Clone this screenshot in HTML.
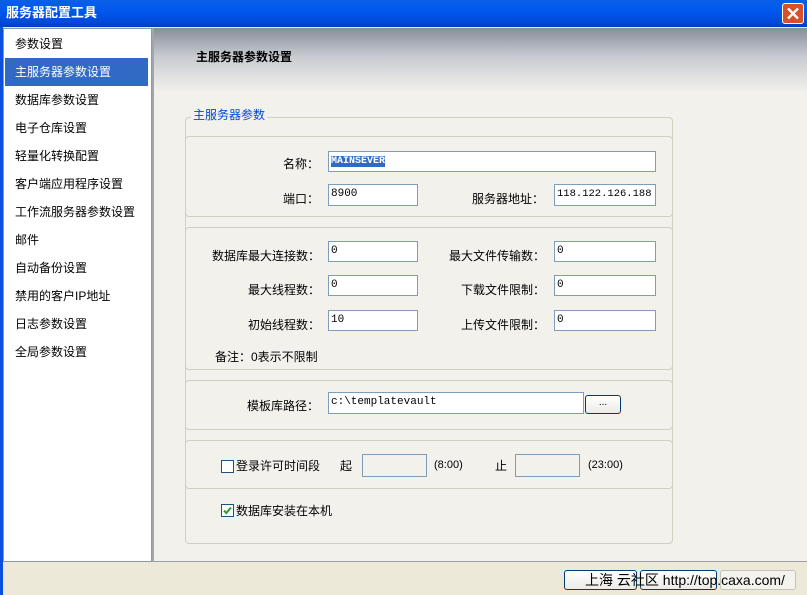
<!DOCTYPE html>
<html><head><meta charset="utf-8"><style>
*{margin:0;padding:0;box-sizing:border-box}
body{width:807px;height:595px;overflow:hidden;position:relative;background:#ECE9D8;font-family:"Liberation Sans","Noto Sans CJK SC",sans-serif;font-size:12px;color:#000}
.a{position:absolute}
.t{position:absolute;white-space:nowrap;line-height:14px}
.inp{position:absolute;background:#fff;border:1px solid #7F9DB9;font-family:"Liberation Mono",monospace;font-size:11px;padding:2px 2px;line-height:14px}
.gb{position:absolute;border:1px solid #D0D0BF;border-radius:4px}
.li{position:absolute;left:5px;width:143px;height:28px;line-height:28px;padding-left:10px;font-size:12px}
.r{text-align:right}
</style></head><body>
<div class="a" style="left:0;top:0;width:807px;height:27px;background:linear-gradient(#0A5FE6,#0058EE 40%,#0049D8 85%,#003BC2)"></div>
<div class="t" style="left:6px;top:6px;color:#fff;font-weight:bold;font-size:13px">服务器配置工具</div>
<div class="a" style="left:782px;top:3px;width:22px;height:21px;background:#D8502A;border:1px solid #fff;border-radius:3px"><svg width="20" height="19" viewBox="0 0 20 19"><path d="M5 4.5L15 14.5M15 4.5L5 14.5" stroke="#fff" stroke-width="2.4"/></svg></div>
<div class="a" style="left:0;top:27px;width:3px;height:568px;background:#0A4FE0"></div>
<div class="a" style="left:3px;top:28px;width:149px;height:534px;background:#fff;border:1px solid #8A9AA6"></div>
<div class="a" style="left:152px;top:28px;width:655px;height:534px;background:#F2F1EC;border-left:2px solid #A0A6AA;border-bottom:1px solid #9AA0A6"></div>
<div class="a" style="left:154px;top:28px;width:653px;height:64px;background:linear-gradient(#878E9A,#C8CBD1 45%,#F2F1EC)"></div>
<div class="t" style="left:196px;top:50px;font-weight:bold">主服务器参数设置</div>
<div class="li" style="top:30px">参数设置</div>
<div class="li" style="top:58px;background:#316AC5;color:#fff">主服务器参数设置</div>
<div class="li" style="top:86px">数据库参数设置</div>
<div class="li" style="top:114px">电子仓库设置</div>
<div class="li" style="top:142px">轻量化转换配置</div>
<div class="li" style="top:170px">客户端应用程序设置</div>
<div class="li" style="top:198px">工作流服务器参数设置</div>
<div class="li" style="top:226px">邮件</div>
<div class="li" style="top:254px">自动备份设置</div>
<div class="li" style="top:282px">禁用的客户IP地址</div>
<div class="li" style="top:310px">日志参数设置</div>
<div class="li" style="top:338px">全局参数设置</div>

<div class="gb" style="left:185px;top:117px;width:488px;height:427px"></div>
<div class="t" style="left:191px;top:108px;background:#F2F1EC;color:#0046D5;padding:0 2px">主服务器参数</div>
<div class="gb" style="left:185px;top:136px;width:488px;height:81px"></div>
<div class="gb" style="left:185px;top:227px;width:488px;height:143px"></div>
<div class="gb" style="left:185px;top:380px;width:488px;height:50px"></div>
<div class="gb" style="left:185px;top:440px;width:488px;height:49px"></div>

<div class="t" style="left:283px;top:157px">名称：</div>
<div class="inp" style="left:328px;top:151px;width:328px;height:21px"><span style="background:#316AC5;color:#fff;font-weight:bold;font-size:10px">MAINSEVER</span></div>
<div class="t" style="left:283px;top:192px">端口：</div>
<div class="inp" style="left:328px;top:184px;width:90px;height:22px">8900</div>
<div class="t" style="left:472px;top:192px">服务器地址：</div>
<div class="inp" style="left:554px;top:184px;width:102px;height:22px;font-size:10.5px">118.122.126.188</div>

<div class="t r" style="left:200px;width:120px;top:249px">数据库最大连接数：</div>
<div class="inp" style="left:328px;top:241px;width:90px;height:21px">0</div>
<div class="t r" style="left:420px;width:125px;top:249px">最大文件传输数：</div>
<div class="inp" style="left:554px;top:241px;width:102px;height:21px">0</div>
<div class="t r" style="left:200px;width:120px;top:283px">最大线程数：</div>
<div class="inp" style="left:328px;top:275px;width:90px;height:21px">0</div>
<div class="t r" style="left:420px;width:125px;top:283px">下载文件限制：</div>
<div class="inp" style="left:554px;top:275px;width:102px;height:21px">0</div>
<div class="t r" style="left:200px;width:120px;top:318px">初始线程数：</div>
<div class="inp" style="left:328px;top:310px;width:90px;height:21px">10</div>
<div class="t r" style="left:420px;width:125px;top:318px">上传文件限制：</div>
<div class="inp" style="left:554px;top:310px;width:102px;height:21px">0</div>
<div class="t" style="left:215px;top:350px">备注：0表示不限制</div>

<div class="t" style="left:247px;top:399px">模板库路径：</div>
<div class="inp" style="left:328px;top:392px;width:256px;height:22px">c:\templatevault</div>
<div class="a" style="left:585px;top:395px;width:36px;height:19px;border:1px solid #003C74;border-radius:3px;background:linear-gradient(#fff,#ECEBE6);font-size:10px;text-align:center;line-height:14px">...</div>

<div class="a" style="left:221px;top:460px;width:13px;height:13px;border:1px solid #1C5180;background:#fff"></div>
<div class="t" style="left:236px;top:459px">登录许可时间段</div>
<div class="t" style="left:340px;top:459px">起</div>
<div class="a" style="left:362px;top:454px;width:65px;height:23px;border:1px solid #7F9DB9;background:#F2F1EC"></div>
<div class="t" style="left:434px;top:458px;font-size:11px">(8:00)</div>
<div class="t" style="left:495px;top:459px">止</div>
<div class="a" style="left:515px;top:454px;width:65px;height:23px;border:1px solid #7F9DB9;background:#F2F1EC"></div>
<div class="t" style="left:588px;top:458px;font-size:11px">(23:00)</div>

<div class="a" style="left:221px;top:504px;width:13px;height:13px;border:1px solid #1C5180;background:#fff"><svg width="11" height="11" viewBox="0 0 11 11"><path d="M2 5.5L4.3 8L9 2.5" stroke="#21A121" stroke-width="2" fill="none"/></svg></div>
<div class="t" style="left:236px;top:504px">数据库安装在本机</div>

<div class="a" style="left:564px;top:570px;width:73px;height:20px;border:1px solid #003C74;border-radius:3px;background:linear-gradient(#fff,#ECEBE6)"></div>
<div class="a" style="left:640px;top:570px;width:77px;height:20px;border:1px solid #003C74;border-radius:3px;background:linear-gradient(#fff,#ECEBE6)"></div>
<div class="a" style="left:720px;top:570px;width:76px;height:20px;border:1px solid #C4C3BC;border-radius:3px;background:#F4F3EE"></div>
<div class="t" style="left:585px;top:572px;font-size:14px;line-height:16px">上海 云社区 http://top.caxa.com/</div>
</body></html>
